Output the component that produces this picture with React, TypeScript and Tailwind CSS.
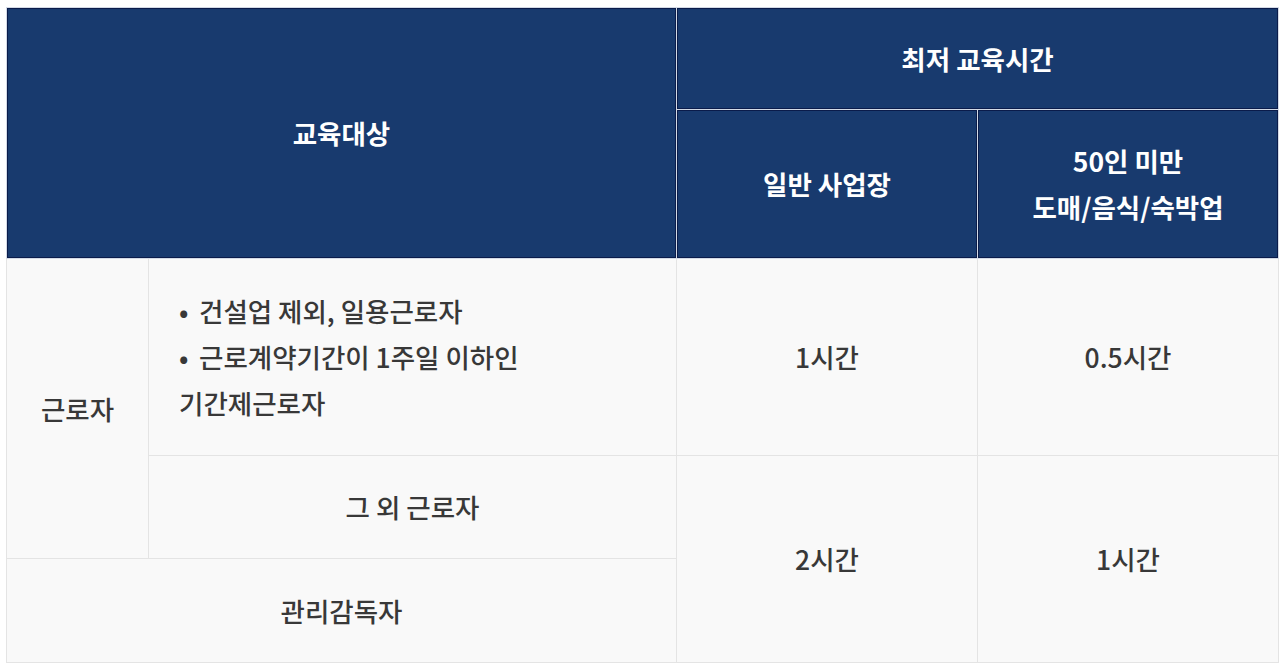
import React from 'react';

const head =
  'bg-[#183a6e] text-white font-bold text-center align-middle border border-[#d3dae6] shadow-[inset_0_0_0_1px_#0a1b4a]';
const cell = 'bg-[#f9f9f9] text-[#383838] font-medium text-center align-middle border border-[#e4e4e4]';

const App: React.FC = () => {
  return (
    <div
      className="w-[1280px] h-[668px] bg-white pt-[7px] pl-[6px]"
      style={{ fontFamily: '"Noto Sans CJK KR", "Noto Sans", sans-serif' }}
    >
      <table className="table-fixed border-collapse w-[1272px] text-[26.5px] leading-[46px]">
        <colgroup>
          <col className="w-[142px]" />
          <col className="w-[528px]" />
          <col className="w-[301px]" />
          <col className="w-[301px]" />
        </colgroup>
        <tbody>
          <tr className="h-[102px]">
            <td colSpan={2} rowSpan={2} className={head}>
              교육대상
            </td>
            <td colSpan={2} className={head}>
              최저 교육시간
            </td>
          </tr>
          <tr className="h-[149px]">
            <td className={head}>일반 사업장</td>
            <td className={head}>
              50인 미만
              <br />
              도매/음식/숙박업
            </td>
          </tr>
          <tr className="h-[197px]">
            <td rowSpan={2} className={cell}>
              근로자
            </td>
            <td className={`${cell} !text-left pl-[30px]`}>
              <div>
                <span className="inline-block w-[20px]">•</span>건설업 제외, 일용근로자
              </div>
              <div>
                <span className="inline-block w-[20px]">•</span>근로계약기간이 1주일 이하인
              </div>
              <div>기간제근로자</div>
            </td>
            <td className={cell}>1시간</td>
            <td className={cell}>0.5시간</td>
          </tr>
          <tr className="h-[103px]">
            <td className={cell}>그 외 근로자</td>
            <td rowSpan={2} className={cell}>
              2시간
            </td>
            <td rowSpan={2} className={cell}>
              1시간
            </td>
          </tr>
          <tr className="h-[104px]">
            <td colSpan={2} className={cell}>
              관리감독자
            </td>
          </tr>
        </tbody>
      </table>
    </div>
  );
};

export default App;
